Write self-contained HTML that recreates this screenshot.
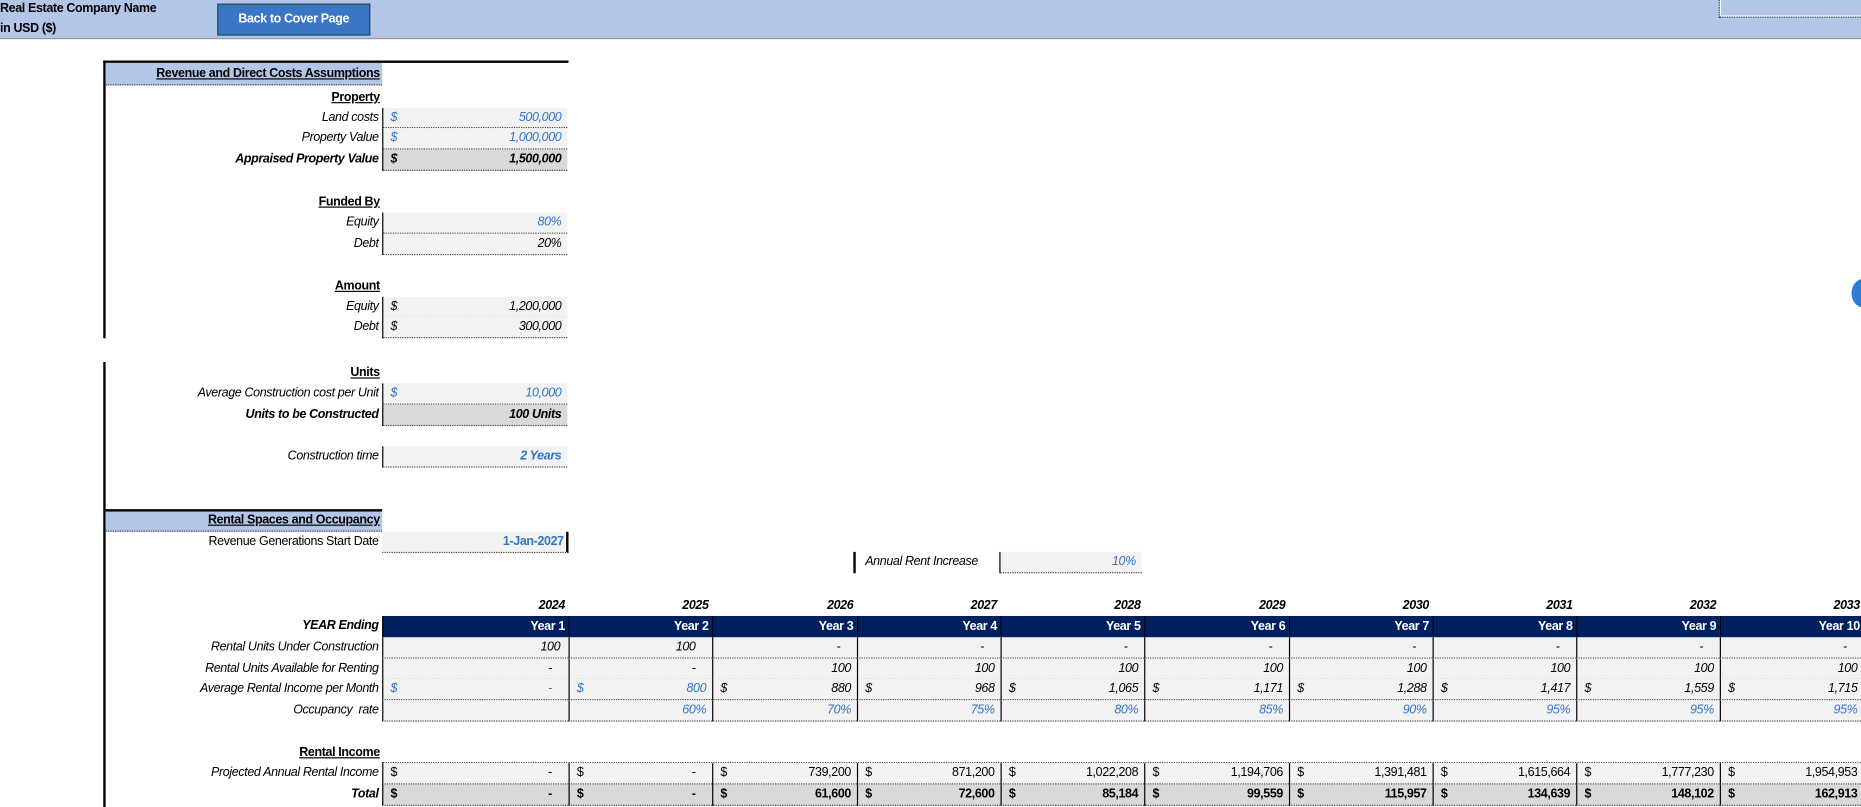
<!DOCTYPE html>
<html><head><meta charset="utf-8"><style>
html,body{margin:0;padding:0;background:#fff;overflow:hidden;width:1861px;height:807px}
#w{position:absolute;left:0;top:0;width:1568px;height:680px;transform:scale(1.18686);transform-origin:0 0;font-family:"Liberation Sans",Arial,sans-serif;font-size:10.5px;color:#000;letter-spacing:-0.3px}
#w div{position:absolute;box-sizing:border-box;white-space:nowrap}
.l{right:1249px;text-align:right;font-style:italic;line-height:17px;height:17px}
.h{font-weight:bold;text-decoration:underline;text-align:right;line-height:17px}
.v{background:#f2f2f2;border-bottom:1px dotted #444;border-left:1px solid #000;font-style:italic;text-align:right;padding-right:5px;line-height:17px}
.g{background:#d9d9d9;font-weight:bold}
.b{color:#2f75c6}
.d{position:absolute;left:6px;top:0}
.n{background:#002060;color:#fff;font-weight:bold;text-align:right;padding-right:3px;line-height:18px;border-left:1px solid #000}
.y{font-weight:bold;font-style:italic;text-align:right;padding-right:3px;line-height:14px}
.u{font-style:normal}
</style></head><body><div id="w">
<div style="left:0;top:0;width:1568px;height:33px;background:#b4c6e7;border-bottom:1px solid #999"></div>
<div style="left:0;top:0;font-weight:bold;line-height:14px">Real Estate Company Name</div>
<div style="left:0;top:17px;font-weight:bold;line-height:14px">in USD ($)</div>
<div style="left:183px;top:3px;width:129px;height:27px;background:#3a76c4;border:1px solid #1f4e4e;color:#fff;font-weight:bold;text-align:center;line-height:25px">Back to Cover Page</div>
<div style="left:1448px;top:-2px;width:122px;height:17px;border:1px dotted #1f4e4e;box-shadow:inset 0 0 0 1px #fff"></div>
<div style="left:1560px;top:235px;width:20px;height:24px;border-radius:50%;background:#2f7bd6"></div>

<div style="left:87px;top:51px;width:392px;height:2px;background:#000"></div>
<div style="left:87px;top:51px;width:2px;height:234px;background:#000"></div>
<div style="left:87px;top:305px;width:2px;height:375px;background:#000"></div>
<div style="left:89px;top:53px;width:233px;height:19px;background:#b4c6e7;border-bottom:1px dotted #444"></div>
<div class="h" style="right:1248px;top:54px">Revenue and Direct Costs Assumptions</div>
<div class="h" style="right:1248px;top:74px">Property</div>
<div class="l" style="top:91px">Land costs</div>
<div class="v b" style="left:322px;top:91px;width:156px;height:17px"><span class="d">$</span>500,000</div>
<div class="l" style="top:108px">Property Value</div>
<div class="v b" style="left:322px;top:108px;width:156px;height:18px"><span class="d">$</span>1,000,000</div>
<div class="l" style="top:126px;font-weight:bold">Appraised Property Value</div>
<div class="v g" style="left:322px;top:126px;width:156px;height:18px"><span class="d">$</span>1,500,000</div>

<div class="h" style="right:1248px;top:162px">Funded By</div>
<div class="l" style="top:179px">Equity</div>
<div class="v b" style="left:322px;top:179px;width:156px;height:18px">80%</div>
<div class="l" style="top:197px">Debt</div>
<div class="v" style="left:322px;top:197px;width:156px;height:18px">20%</div>

<div class="h" style="right:1248px;top:233px">Amount</div>
<div class="l" style="top:250px">Equity</div>
<div class="v" style="left:322px;top:250px;width:156px;height:18px"><span class="d">$</span>1,200,000</div>
<div class="l" style="top:267px">Debt</div>
<div class="v" style="left:322px;top:267px;width:156px;height:18px"><span class="d">$</span>300,000</div>

<div class="h" style="right:1248px;top:306px">Units</div>
<div class="l" style="top:323px">Average Construction cost per Unit</div>
<div class="v b" style="left:322px;top:323px;width:156px;height:18px"><span class="d">$</span>10,000</div>
<div class="l" style="top:341px;font-weight:bold">Units to be Constructed</div>
<div class="v g" style="left:322px;top:341px;width:156px;height:18px">100 Units</div>

<div class="l" style="top:376px">Construction time</div>
<div class="v b" style="left:322px;top:376px;width:156px;height:18px;font-weight:bold">2 Years</div>

<div style="left:89px;top:429px;width:233px;height:19px;background:#b4c6e7;border-top:2px solid #000;border-bottom:1px dotted #444"></div>
<div class="h" style="right:1248px;top:430px">Rental Spaces and Occupancy</div>
<div class="l" style="top:448px;font-style:normal">Revenue Generations Start Date</div>
<div class="v b" style="left:322px;top:448px;width:157px;height:18px;border-left:none;border-right:2px solid #000;font-weight:bold;font-style:normal;padding-right:2px">1-Jan-2027</div>

<div style="left:719px;top:465px;width:2px;height:18px;background:#000"></div>
<div style="left:729px;top:465px;font-style:italic;line-height:17px">Annual Rent Increase</div>
<div class="v b" style="left:842px;top:465px;width:120px;height:18px">10%</div>

<div class="y" style="left:322px;top:503px;width:157px">2024</div>
<div class="y" style="left:479px;top:503px;width:121px">2025</div>
<div class="y" style="left:600px;top:503px;width:122px">2026</div>
<div class="y" style="left:722px;top:503px;width:121px">2027</div>
<div class="y" style="left:843px;top:503px;width:121px">2028</div>
<div class="y" style="left:964px;top:503px;width:122px">2029</div>
<div class="y" style="left:1086px;top:503px;width:121px">2030</div>
<div class="y" style="left:1207px;top:503px;width:121px">2031</div>
<div class="y" style="left:1328px;top:503px;width:121px">2032</div>
<div class="y" style="left:1449px;top:503px;width:121px">2033</div>

<div class="l" style="top:519px;font-weight:bold">YEAR Ending</div>
<div class="n" style="left:322px;top:519px;width:157px;height:18px">Year 1</div>
<div class="n" style="left:479px;top:519px;width:121px;height:18px">Year 2</div>
<div class="n" style="left:600px;top:519px;width:122px;height:18px">Year 3</div>
<div class="n" style="left:722px;top:519px;width:121px;height:18px">Year 4</div>
<div class="n" style="left:843px;top:519px;width:121px;height:18px">Year 5</div>
<div class="n" style="left:964px;top:519px;width:122px;height:18px">Year 6</div>
<div class="n" style="left:1086px;top:519px;width:121px;height:18px">Year 7</div>
<div class="n" style="left:1207px;top:519px;width:121px;height:18px">Year 8</div>
<div class="n" style="left:1328px;top:519px;width:121px;height:18px">Year 9</div>
<div class="n" style="left:1449px;top:519px;width:121px;height:18px">Year 10</div>

<div class="l" style="top:537px">Rental Units Under Construction</div>
<div class="v" style="left:322px;top:537px;width:157px;height:18px;padding-right:7px">100</div>
<div class="v" style="left:479px;top:537px;width:121px;height:18px;padding-right:14px">100</div>
<div class="v" style="left:600px;top:537px;width:122px;height:18px;padding-right:14px">-</div>
<div class="v" style="left:722px;top:537px;width:121px;height:18px;padding-right:14px">-</div>
<div class="v" style="left:843px;top:537px;width:121px;height:18px;padding-right:14px">-</div>
<div class="v" style="left:964px;top:537px;width:122px;height:18px;padding-right:14px">-</div>
<div class="v" style="left:1086px;top:537px;width:121px;height:18px;padding-right:14px">-</div>
<div class="v" style="left:1207px;top:537px;width:121px;height:18px;padding-right:14px">-</div>
<div class="v" style="left:1328px;top:537px;width:121px;height:18px;padding-right:14px">-</div>
<div class="v" style="left:1449px;top:537px;width:121px;height:18px;padding-right:14px">-</div>

<div class="l" style="top:555px">Rental Units Available for Renting</div>
<div class="v" style="left:322px;top:555px;width:157px;height:18px;padding-right:14px">-</div>
<div class="v" style="left:479px;top:555px;width:121px;height:18px;padding-right:14px">-</div>
<div class="v" style="left:600px;top:555px;width:122px;height:18px">100</div>
<div class="v" style="left:722px;top:555px;width:121px;height:18px">100</div>
<div class="v" style="left:843px;top:555px;width:121px;height:18px">100</div>
<div class="v" style="left:964px;top:555px;width:122px;height:18px">100</div>
<div class="v" style="left:1086px;top:555px;width:121px;height:18px">100</div>
<div class="v" style="left:1207px;top:555px;width:121px;height:18px">100</div>
<div class="v" style="left:1328px;top:555px;width:121px;height:18px">100</div>
<div class="v" style="left:1449px;top:555px;width:121px;height:18px">100</div>

<div class="l" style="top:572px">Average Rental Income per Month</div>
<div class="v b" style="left:322px;top:572px;width:157px;height:18px;padding-right:14px"><span class="d">$</span>-</div>
<div class="v b" style="left:479px;top:572px;width:121px;height:18px"><span class="d">$</span>800</div>
<div class="v" style="left:600px;top:572px;width:122px;height:18px"><span class="d">$</span>880</div>
<div class="v" style="left:722px;top:572px;width:121px;height:18px"><span class="d">$</span>968</div>
<div class="v" style="left:843px;top:572px;width:121px;height:18px"><span class="d">$</span>1,065</div>
<div class="v" style="left:964px;top:572px;width:122px;height:18px"><span class="d">$</span>1,171</div>
<div class="v" style="left:1086px;top:572px;width:121px;height:18px"><span class="d">$</span>1,288</div>
<div class="v" style="left:1207px;top:572px;width:121px;height:18px"><span class="d">$</span>1,417</div>
<div class="v" style="left:1328px;top:572px;width:121px;height:18px"><span class="d">$</span>1,559</div>
<div class="v" style="left:1449px;top:572px;width:121px;height:18px"><span class="d">$</span>1,715</div>

<div class="l" style="top:590px">Occupancy &nbsp;rate</div>
<div class="v b" style="left:322px;top:590px;width:157px;height:18px"></div>
<div class="v b" style="left:479px;top:590px;width:121px;height:18px">60%</div>
<div class="v b" style="left:600px;top:590px;width:122px;height:18px">70%</div>
<div class="v b" style="left:722px;top:590px;width:121px;height:18px">75%</div>
<div class="v b" style="left:843px;top:590px;width:121px;height:18px">80%</div>
<div class="v b" style="left:964px;top:590px;width:122px;height:18px">85%</div>
<div class="v b" style="left:1086px;top:590px;width:121px;height:18px">90%</div>
<div class="v b" style="left:1207px;top:590px;width:121px;height:18px">95%</div>
<div class="v b" style="left:1328px;top:590px;width:121px;height:18px">95%</div>
<div class="v b" style="left:1449px;top:590px;width:121px;height:18px">95%</div>

<div class="h" style="right:1248px;top:626px">Rental Income</div>
<div style="left:322px;top:642px;width:1248px;border-top:1px dotted #444"></div>
<div class="l" style="top:643px">Projected Annual Rental Income</div>
<div class="v u" style="left:322px;top:643px;width:157px;height:18px;padding-right:14px"><span class="d">$</span>-</div>
<div class="v u" style="left:479px;top:643px;width:121px;height:18px;padding-right:14px"><span class="d">$</span>-</div>
<div class="v u" style="left:600px;top:643px;width:122px;height:18px"><span class="d">$</span>739,200</div>
<div class="v u" style="left:722px;top:643px;width:121px;height:18px"><span class="d">$</span>871,200</div>
<div class="v u" style="left:843px;top:643px;width:121px;height:18px"><span class="d">$</span>1,022,208</div>
<div class="v u" style="left:964px;top:643px;width:122px;height:18px"><span class="d">$</span>1,194,706</div>
<div class="v u" style="left:1086px;top:643px;width:121px;height:18px"><span class="d">$</span>1,391,481</div>
<div class="v u" style="left:1207px;top:643px;width:121px;height:18px"><span class="d">$</span>1,615,664</div>
<div class="v u" style="left:1328px;top:643px;width:121px;height:18px"><span class="d">$</span>1,777,230</div>
<div class="v u" style="left:1449px;top:643px;width:121px;height:18px"><span class="d">$</span>1,954,953</div>

<div class="l" style="top:661px;font-weight:bold">Total</div>
<div class="v u g" style="left:322px;top:661px;width:157px;height:18px;padding-right:14px"><span class="d">$</span>-</div>
<div class="v u g" style="left:479px;top:661px;width:121px;height:18px;padding-right:14px"><span class="d">$</span>-</div>
<div class="v u g" style="left:600px;top:661px;width:122px;height:18px"><span class="d">$</span>61,600</div>
<div class="v u g" style="left:722px;top:661px;width:121px;height:18px"><span class="d">$</span>72,600</div>
<div class="v u g" style="left:843px;top:661px;width:121px;height:18px"><span class="d">$</span>85,184</div>
<div class="v u g" style="left:964px;top:661px;width:122px;height:18px"><span class="d">$</span>99,559</div>
<div class="v u g" style="left:1086px;top:661px;width:121px;height:18px"><span class="d">$</span>115,957</div>
<div class="v u g" style="left:1207px;top:661px;width:121px;height:18px"><span class="d">$</span>134,639</div>
<div class="v u g" style="left:1328px;top:661px;width:121px;height:18px"><span class="d">$</span>148,102</div>
<div class="v u g" style="left:1449px;top:661px;width:121px;height:18px"><span class="d">$</span>162,913</div>
</div></body></html>
